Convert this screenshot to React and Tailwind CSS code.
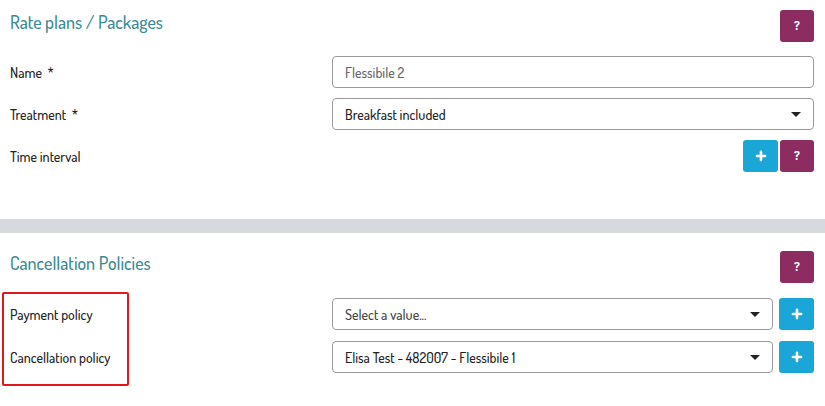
import { Plus } from 'lucide-react';

const font = { fontFamily: '"Dosis", "Liberation Sans Narrow", "Roboto", sans-serif' };

function HelpBtn() {
  return (
    <button className="w-[34px] h-[32px] rounded-[3px] bg-[#8c2c61] text-white text-[13px] font-extrabold flex items-center justify-center">
      ?
    </button>
  );
}

function AddBtn() {
  return (
    <button className="w-[35px] h-[32px] rounded-[3px] bg-[#1aa6d6] text-white flex items-center justify-center">
      <Plus className="w-[14px] h-[14px]" strokeWidth={4.5} />
    </button>
  );
}

function Caret() {
  return <span className="w-0 h-0 border-l-[5px] border-r-[5px] border-t-[5px] border-l-transparent border-r-transparent border-t-[#222]" />;
}

function Select({ value, muted }) {
  return (
    <div className="flex-1 h-[32px] border border-[#9a9a9a] rounded-[4px] flex items-center justify-between pl-[12px] pr-[12px]">
      <span className={`text-[14px] font-medium ${muted ? 'text-[#444]' : 'text-[#222]'}`}>{value}</span>
      <Caret />
    </div>
  );
}

function Row({ label, children }) {
  return (
    <div className="flex items-center h-[32px]">
      <div className="w-[322px] text-[14px] font-medium text-[#222]">{label}</div>
      <div className="flex-1 flex items-center gap-[6px]">{children}</div>
    </div>
  );
}

export default function App() {
  return (
    <div className="w-[825px] h-[406px] bg-white overflow-hidden" style={font}>
      {/* Rate plans */}
      <div className="pl-[10px] pr-[11px] pt-[10px] h-[219px]">
        <div className="flex items-start justify-between h-[46px]">
          <h2 className="text-[18px] font-medium text-[#3a8b93] leading-[24px]">Rate plans / Packages</h2>
          <HelpBtn />
        </div>
        <div className="flex flex-col gap-[10px]">
          <Row label={'Name\u00a0\u00a0*'}>
            <div className="flex-1 h-[32px] border border-[#9a9a9a] rounded-[4px] flex items-center pl-[12px] text-[14px] font-medium text-[#666]">
              Flessibile 2
            </div>
          </Row>
          <Row label={'Treatment\u00a0\u00a0*'}>
            <Select value="Breakfast included" />
          </Row>
          <Row label="Time interval">
            <div className="flex-1 flex justify-end gap-[2px]">
              <AddBtn />
              <HelpBtn />
            </div>
          </Row>
        </div>
      </div>

      <div className="h-[14px] bg-[#d6d9de]" />

      {/* Cancellation */}
      <div className="relative pl-[10px] pr-[11px] pt-[18px]">
        <div className="flex items-start justify-between h-[47px]">
          <h2 className="text-[18px] font-medium text-[#3a8b93] leading-[24px]">Cancellation Policies</h2>
          <HelpBtn />
        </div>
        <div className="flex flex-col gap-[11px]">
          <Row label="Payment policy">
            <Select value="Select a value..." muted />
            <AddBtn />
          </Row>
          <Row label="Cancellation policy">
            <Select value="Elisa Test - 482007 - Flessibile 1" />
            <AddBtn />
          </Row>
        </div>
        <div className="absolute left-[2px] top-[59px] w-[127px] h-[94px] border-2 border-[#e3161b] rounded-[2px] pointer-events-none" />
      </div>
    </div>
  );
}
